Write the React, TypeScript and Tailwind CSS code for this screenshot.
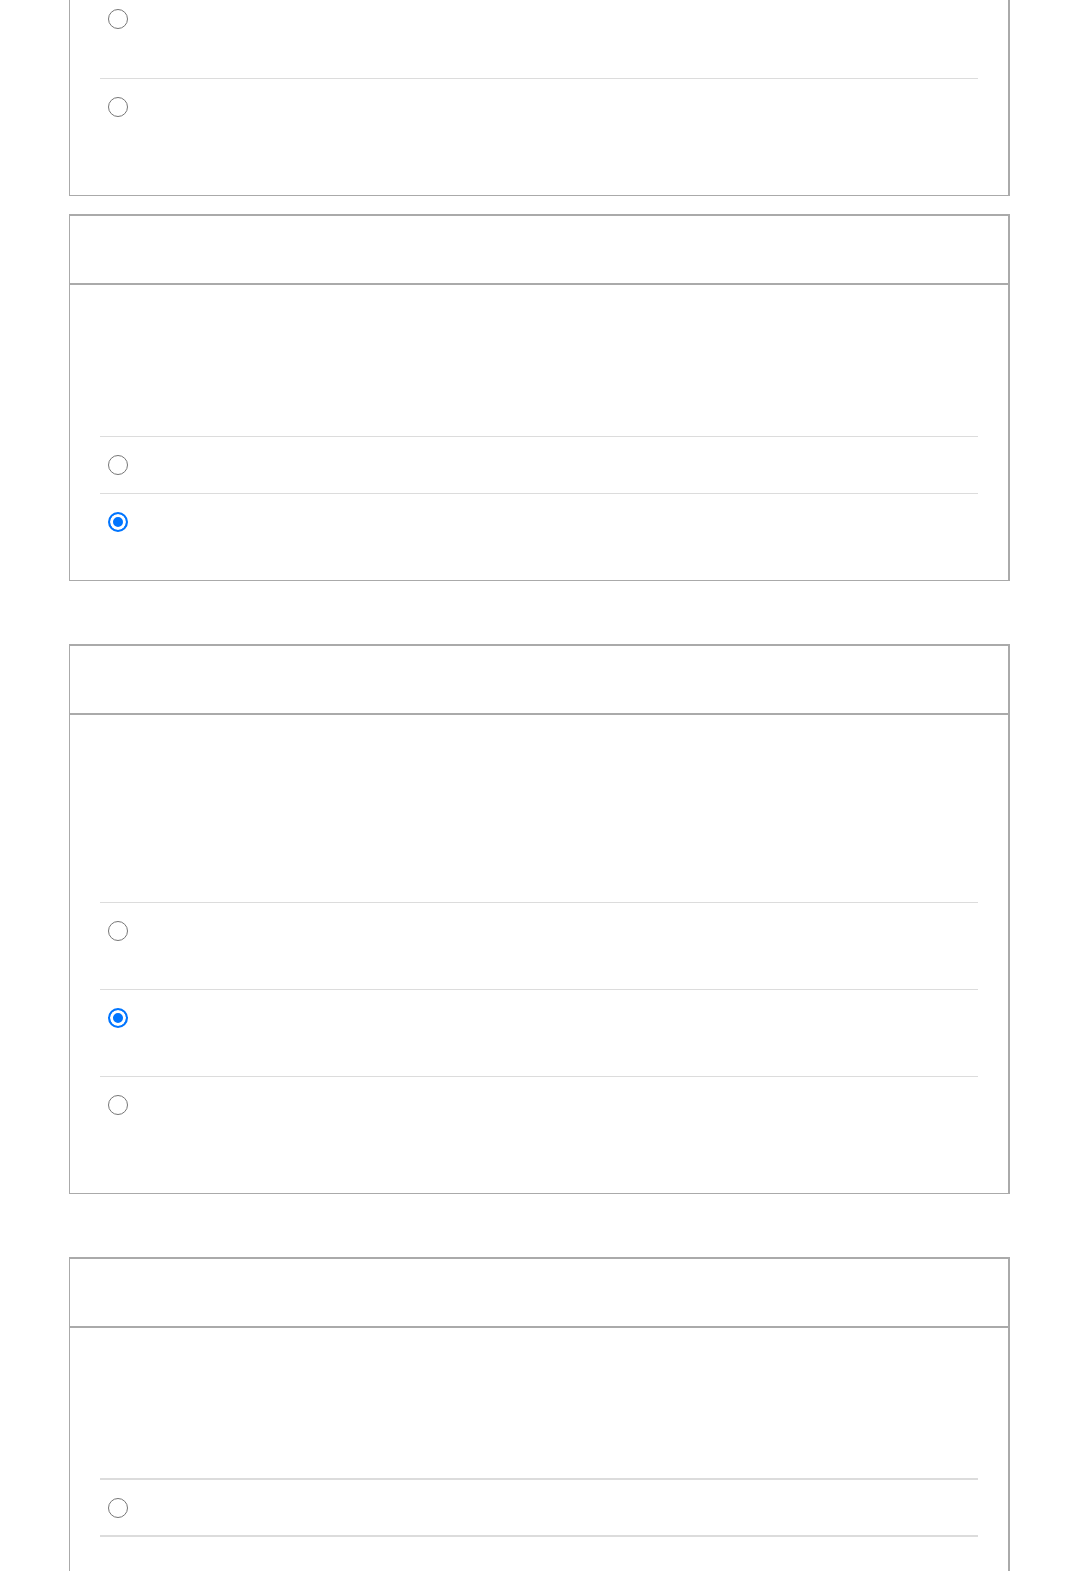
import React from "react";

type Row = { tall: boolean; checked?: boolean };

const Radio: React.FC<{ checked?: boolean }> = ({ checked }) => (
  <input
    type="radio"
    defaultChecked={checked}
    readOnly
    className="m-0 w-5 h-5 shrink-0 appearance-none rounded-full border-[1.5px] border-[#767676] bg-white checked:border-2 checked:border-[#0075ff] checked:bg-[#0075ff] checked:shadow-[inset_0_0_0_3px_white]"
  />
);

const OptionRow: React.FC<{ row: Row; first?: boolean; thick?: boolean }> = ({
  row,
  first,
  thick,
}) => (
  <div
    className={`flex items-start ${first ? "" : thick ? "border-t-2 border-[#dcdcdc]" : "border-t border-[#dcdcdc]"} ${
      row.tall ? "h-[87px]" : "h-[57px]"
    } pt-[18px] pl-2`}
  >
    <Radio checked={row.checked} />
    <label className="ml-3 text-base text-white" />
  </div>
);

// Card with header strip, blank question area and option rows
const QuestionCard: React.FC<{
  blank: number;
  rows: Row[];
  thick?: boolean;
  trailing?: boolean;
  className?: string;
}> = ({ blank, rows, thick, trailing, className }) => (
  <div
    className={`w-[941px] bg-white border-t-2 border-r-2 border-l border-b border-[#aaaaaa] ${className ?? ""}`}
  >
    <div className="h-[69px] border-b-2 border-[#aaaaaa]" />
    <div className="px-[30px] pb-[30px]">
      <div style={{ height: blank }} />
      {rows.map((r, i) => (
        <OptionRow key={i} row={r} thick={thick} />
      ))}
      {trailing && <div className="h-[60px] border-t-2 border-[#dcdcdc]" />}
    </div>
  </div>
);

export default function App() {
  return (
    <div
      className="min-h-screen bg-white pl-[69px] overflow-hidden"
      style={{ fontFamily: "'Liberation Sans', Arial, sans-serif" }}
    >
      {/* partially scrolled card */}
      <div className="w-[941px] -mt-[9px] bg-white border-r-2 border-l border-b border-[#aaaaaa]">
        <div className="px-[30px] pb-[30px]">
          <OptionRow row={{ tall: true }} first />
          <OptionRow row={{ tall: true }} />
        </div>
      </div>

      <QuestionCard
        className="mt-[18px]"
        blank={151}
        rows={[{ tall: false }, { tall: false, checked: true }]}
      />

      <QuestionCard
        className="mt-[63px]"
        blank={187}
        rows={[
          { tall: true },
          { tall: true, checked: true },
          { tall: true },
        ]}
      />

      <QuestionCard
        className="mt-[63px]"
        blank={150}
        thick
        trailing
        rows={[{ tall: false }]}
      />
    </div>
  );
}
